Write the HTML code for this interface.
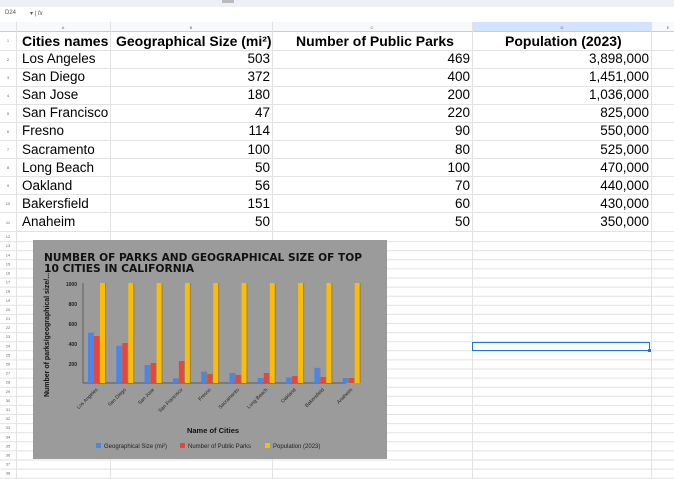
<!DOCTYPE html>
<html><head><style>
body{margin:0;width:674px;height:479px;overflow:hidden;background:#fff;font-family:"Liberation Sans",Arial,sans-serif;position:relative}
.a{position:absolute}
.t{position:absolute;font-size:13.5px;color:#000;white-space:nowrap}
</style></head><body>
<div class="a" style="left:0;top:0;width:674px;height:7px;background:#edf1f7"></div>
<div class="a" style="left:222px;top:0;width:12px;height:3px;background:#bbb"></div>
<div class="a" style="left:0;top:7px;width:674px;height:15px;background:#fff;border-bottom:1px solid #ddd"></div>
<div class="t" style="left:5px;top:10px;font-size:6px;color:#555">D24</div>
<div class="t" style="left:30px;top:10px;font-size:6px;color:#555">▾ | <i>fx</i></div>
<div class="a" style="left:0;top:22px;width:674px;height:9px;background:#f8f9fa;border-bottom:1px solid #ccc"></div>
<div class="a" style="left:472px;top:22px;width:180px;height:9px;background:#d3e3fd"></div>
<svg class="a" style="left:0;top:0" width="674" height="479">
<g stroke="#e2e2e2" stroke-width="1">
<line x1="16.5" y1="22" x2="16.5" y2="479"/><line x1="110.5" y1="22" x2="110.5" y2="479"/><line x1="272.5" y1="22" x2="272.5" y2="479"/><line x1="472.5" y1="22" x2="472.5" y2="479"/><line x1="651.5" y1="22" x2="651.5" y2="479"/>
<line x1="0" y1="50.5" x2="674" y2="50.5"/>
<line x1="0" y1="68.5" x2="674" y2="68.5"/><line x1="0" y1="86.5" x2="674" y2="86.5"/><line x1="0" y1="104.5" x2="674" y2="104.5"/><line x1="0" y1="122.5" x2="674" y2="122.5"/><line x1="0" y1="140.5" x2="674" y2="140.5"/><line x1="0" y1="158.5" x2="674" y2="158.5"/><line x1="0" y1="176.5" x2="674" y2="176.5"/><line x1="0" y1="194.5" x2="674" y2="194.5"/><line x1="0" y1="212.5" x2="674" y2="212.5"/><line x1="0" y1="231.5" x2="674" y2="231.5"/>
</g>
<g id="sr" stroke="#e2e2e2"></g>
<g font-size="4" fill="#666" text-anchor="middle" font-family="Liberation Sans">
<text x="63" y="29">A</text><text x="191" y="29">B</text><text x="372" y="29">C</text><text x="562" y="29">D</text><text x="668" y="29">E</text>
<text x="8" y="42">1</text><text x="8" y="61">2</text><text x="8" y="79">3</text><text x="8" y="97">4</text><text x="8" y="115">5</text><text x="8" y="133">6</text><text x="8" y="151">7</text><text x="8" y="169">8</text><text x="8" y="187">9</text><text x="8" y="205">10</text><text x="8" y="224">11</text>
</g>
<g id="srn" font-size="4" fill="#666" text-anchor="middle" font-family="Liberation Sans"></g>
<rect x="472.5" y="342.5" width="177" height="8" fill="none" stroke="#1a73e8" stroke-width="1"/>
<rect x="648" y="349" width="3" height="3" fill="#1a73e8"/>
</svg>
<div class="t" style="left:22px;top:33px;font-weight:bold;font-size:14px">Cities names</div>
<div class="t" style="left:116px;top:33px;font-weight:bold;font-size:14px">Geographical Size (mi²)</div>
<div class="t" style="left:296px;top:33px;font-weight:bold;font-size:14px">Number of Public Parks</div>
<div class="t" style="left:505px;top:33px;font-weight:bold;font-size:14px">Population (2023)</div>
<div id="rows"></div>
<svg class="a" style="left:33px;top:240px" width="354" height="219" font-family="Liberation Sans">
<rect width="354" height="219" fill="#9b9b9b"/>
<text x="11" y="21" font-size="10.3" font-weight="bold" fill="#111" font-family="DejaVu Sans" textLength="318" lengthAdjust="spacingAndGlyphs">NUMBER OF PARKS AND GEOGRAPHICAL SIZE OF TOP</text>
<text x="11" y="32" font-size="10.3" font-weight="bold" fill="#111" font-family="DejaVu Sans" textLength="150" lengthAdjust="spacingAndGlyphs">10 CITIES IN CALIFORNIA</text>
<g font-size="5" fill="#222" text-anchor="end" font-weight="bold"><text x="44" y="46">1000</text><text x="44" y="86">600</text><text x="44" y="66">800</text><text x="44" y="106">400</text><text x="44" y="126">200</text></g>
<line x1="50" y1="43" x2="50" y2="143" stroke="#444" stroke-width="0.7"/>
<line x1="50" y1="143" x2="313" y2="143" stroke="#444" stroke-width="0.8"/>
<text transform="translate(16,95) rotate(-90)" text-anchor="middle" font-size="7" font-weight="bold" fill="#111">Number of parks/geographical size/...</text>
<g id="bars"></g>
<text x="180" y="193" text-anchor="middle" font-size="7.5" fill="#111" font-weight="bold">Name of Cities</text>
<rect x="63" y="203" width="5" height="5" fill="#4a86e8"/><text x="71" y="208" font-size="6" fill="#222">Geographical Size (mi²)</text>
<rect x="147" y="203" width="5" height="5" fill="#e8453c"/><text x="155" y="208" font-size="6" fill="#222">Number of Public Parks</text>
<rect x="232" y="203" width="5" height="5" fill="#fbbc04"/><text x="240" y="208" font-size="6" fill="#222">Population (2023)</text>
</svg>
<script>
var d=[["Los Angeles",503,469,"3,898,000"],["San Diego",372,400,"1,451,000"],["San Jose",180,200,"1,036,000"],["San Francisco",47,220,"825,000"],["Fresno",114,90,"550,000"],["Sacramento",100,80,"525,000"],["Long Beach",50,100,"470,000"],["Oakland",56,70,"440,000"],["Bakersfield",151,60,"430,000"],["Anaheim",50,50,"350,000"]];
var h="",b="";
d.forEach(function(r,i){var y=51+i*18.1;
h+='<div class="t" style="left:22px;top:'+y+'px">'+r[0]+'</div><div class="t" style="right:404px;top:'+y+'px">'+r[1]+'</div><div class="t" style="right:204px;top:'+y+'px">'+r[2]+'</div><div class="t" style="right:25px;top:'+y+'px">'+r[3]+'</div>';
var x=55+i*28.3;
function bar(xx,v,c){var hh=Math.min(v,1000)/10;return '<rect x="'+xx+'" y="'+(143-hh)+'" width="5" height="'+hh+'" fill="'+c+'"/><rect x="'+(xx+5)+'" y="'+(143-hh)+'" width="1" height="'+hh+'" fill="#8a6a10" opacity=".5"/>';}
b+=bar(x,r[1]<30?30:r[1],"#4a86e8")+bar(x+6,r[2],"#e8453c")+bar(x+12,1000,"#fbbc04");
b+='<text transform="translate('+(x+10)+',150) rotate(-45)" text-anchor="end" font-size="5" fill="#222">'+r[0]+'</text>';
});
document.getElementById("rows").innerHTML=h;
document.getElementById("bars").innerHTML=b;
var s="",n="";for(var k=12;k<=38;k++){var y=232+(k-11)*9.1;s+='<line x1="0" y1="'+(y+0.5)+'" x2="674" y2="'+(y+0.5)+'"/>';n+='<text x="8" y="'+(y-3)+'">'+k+'</text>';}
document.getElementById("sr").innerHTML=s;document.getElementById("srn").innerHTML=n;
</script>
</body></html>
